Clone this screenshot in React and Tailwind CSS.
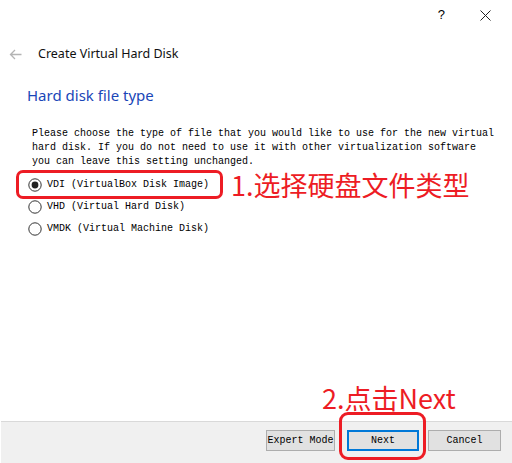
import React from "react";

const mono = { fontFamily: '"Liberation Mono", "DejaVu Sans Mono", monospace' };

const Radio = ({ checked, label }) => (
  <div className="flex items-center h-[22px]">
    <svg width="14" height="14" viewBox="0 0 14 14" className="ml-[28px] mr-[5px]">
      <circle cx="7" cy="7" r="6.2" fill="white" stroke="#333" strokeWidth="1" />
      {checked && <circle cx="7" cy="7" r="3.4" fill="#222" />}
    </svg>
    <span className="font-['Liberation_Mono',monospace] text-[10px] text-black leading-none">{label}</span>
  </div>
);

const App = () => {
  return (
    <div className="relative w-[512px] h-[463px] bg-white flex flex-col overflow-hidden font-['Noto_Sans',sans-serif]">
      {/* Title bar */}
      <div className="h-[30px] flex items-center justify-end pr-[21px] gap-[35px] text-black">
        <span className="text-[13px] font-['Liberation_Sans',sans-serif]">?</span>
        <svg width="11" height="11" viewBox="0 0 11 11">
          <path d="M0.5 0.5 L10.5 10.5 M10.5 0.5 L0.5 10.5" stroke="#222" strokeWidth="1" />
        </svg>
      </div>

      {/* Wizard header */}
      <div className="flex items-center h-[20px] mt-[14px] pl-[9px]">
        <svg width="13" height="11" viewBox="0 0 13 11">
          <path d="M12.5 5.5 H1.5 M6 1 L1.5 5.5 L6 10" stroke="#b4b4b4" strokeWidth="1.3" fill="none" />
        </svg>
        <span className="ml-[16px] text-[12.5px] text-[#111] leading-none">Create Virtual Hard Disk</span>
      </div>

      <h2 className="mt-[24px] ml-[27px] text-[15px] text-[#1a46b8] leading-none">Hard disk file type</h2>

      <p className="mt-[24px] ml-[32px] text-[10px] leading-[14px] text-black whitespace-pre" style={mono}>
        {"Please choose the type of file that you would like to use for the new virtual\nhard disk. If you do not need to use it with other virtualization software\nyou can leave this setting unchanged."}
      </p>

      <div className="mt-[5px] flex flex-col">
        <Radio checked label="VDI (VirtualBox Disk Image)" />
        <Radio label="VHD (Virtual Hard Disk)" />
        <Radio label="VMDK (Virtual Machine Disk)" />
      </div>

      <div className="flex-1" />

      {/* Footer */}
      <div className="h-[42px] ml-px bg-[#f0f0f0] border-t border-[#d9d9d9] flex items-start justify-end pt-[8px] pr-[11px]">
        <button className="w-[69px] h-[21px] bg-[#e1e1e1] border border-[#adadad] text-[10px] text-black" style={mono}>
          Expert Mode
        </button>
        <button className="ml-[12px] w-[72px] h-[21px] bg-[#e1e1e1] border-2 border-[#0078d7] text-[10px] text-black" style={mono}>
          Next
        </button>
        <button className="ml-[9px] w-[73px] h-[21px] bg-[#e1e1e1] border border-[#adadad] text-[10px] text-black" style={mono}>
          Cancel
        </button>
      </div>

      {/* Annotations */}
      <div className="absolute left-[16px] top-[170px] w-[207px] h-[29px] border-[3px] border-[#ed1c24] rounded-[7px]" />
      <div className="absolute left-[231px] top-[167px] text-[27px] leading-[35px] text-[#ed1c24] font-['Noto_Sans_CJK_SC',sans-serif]">
        1.选择硬盘文件类型
      </div>
      <div className="absolute left-[322px] top-[380px] text-[27px] leading-[35px] text-[#ed1c24] font-['Noto_Sans_CJK_SC',sans-serif]">
        2.点击Next
      </div>
      <div className="absolute left-[339px] top-[412px] w-[87px] h-[48px] border-[3px] border-[#ed1c24] rounded-[9px]" />
    </div>
  );
};

export default App;
